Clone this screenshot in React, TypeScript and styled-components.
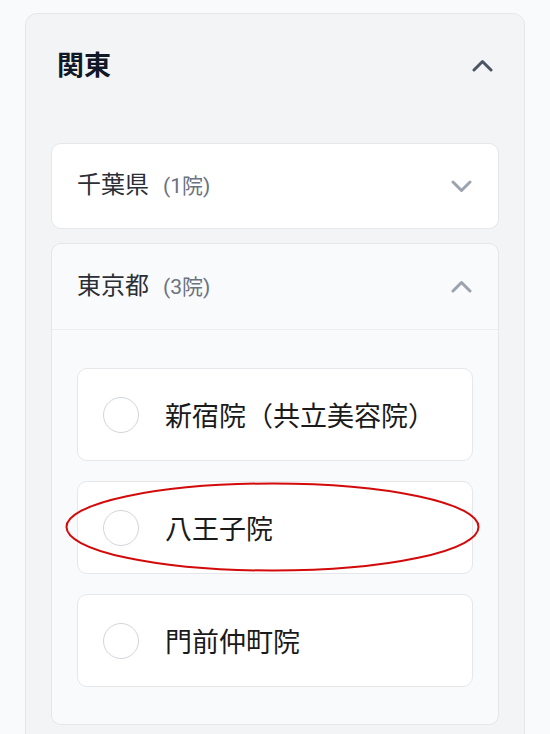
import React from "react";
import styled, { createGlobalStyle } from "styled-components";

const GlobalStyle = createGlobalStyle`
  html, body {
    margin: 0;
    padding: 0;
    background: #f9fafb;
    font-family: Roboto, "Noto Sans CJK JP", "Noto Sans", sans-serif;
  }
`;

type Clinic = { name: string; marked?: boolean };

const tokyoClinics: Clinic[] = [
  { name: "新宿院（共立美容院）" },
  { name: "八王子院", marked: true },
  { name: "門前仲町院" },
];

const Chevron = ({ up, color }: { up?: boolean; color: string }) => (
  <svg width="21" height="13" viewBox="0 0 21 13" fill="none">
    <polyline
      points={up ? "2,11 10.5,2.5 19,11" : "2,2 10.5,10.5 19,2"}
      stroke={color}
      strokeWidth="3"
      strokeLinecap="round"
      strokeLinejoin="round"
    />
  </svg>
);

const App = () => {
  return (
    <>
      <GlobalStyle />
      <Page>
        <RegionCard>
          <RegionHeader>
            <RegionTitle>関東</RegionTitle>
            <Chevron up color="#4b5563" />
          </RegionHeader>

          <PrefList>
            <PrefCard>
              <PrefHeader>
                <PrefName>
                  千葉県<Count>(1院)</Count>
                </PrefName>
                <Chevron color="#9ca3af" />
              </PrefHeader>
            </PrefCard>

            <PrefCard open>
              <PrefHeader open>
                <PrefName>
                  東京都<Count>(3院)</Count>
                </PrefName>
                <Chevron up color="#9ca3af" />
              </PrefHeader>
              <ClinicList>
                {tokyoClinics.map((c) => (
                  <ClinicItem key={c.name}>
                    <Radio />
                    <ClinicName>{c.name}</ClinicName>
                    {c.marked && (
                      <Mark viewBox="0 0 415 90" fill="none">
                        <ellipse
                          cx="207.5"
                          cy="45"
                          rx="206"
                          ry="43.5"
                          stroke="#d20a0a"
                          strokeWidth="2"
                        />
                      </Mark>
                    )}
                  </ClinicItem>
                ))}
              </ClinicList>
            </PrefCard>
          </PrefList>
        </RegionCard>
      </Page>
    </>
  );
};

const Page = styled.div`
  padding: 13px 25px 0 25px;
  height: 734px;
  box-sizing: border-box;
  overflow: hidden;
`;

const RegionCard = styled.div`
  background: #f3f4f6;
  border: 1px solid #e5e7eb;
  border-radius: 12px;
  padding: 0 25px 26px;
`;

const RegionHeader = styled.div`
  height: 103px;
  box-sizing: border-box;
  display: flex;
  align-items: center;
  justify-content: space-between;
  padding: 0 6px;
`;

const RegionTitle = styled.h2`
  margin: 0 0 5px;
  font-size: 27px;
  line-height: 1;
  font-weight: 700;
  color: #111827;
  font-family: "Noto Sans CJK JP", sans-serif;
`;

const PrefList = styled.div`
  display: flex;
  flex-direction: column;
  gap: 14px;
  padding-top: 26px;
`;

const PrefCard = styled.div<{ open?: boolean }>`
  background: ${(p) => (p.open ? "#f9fafb" : "#ffffff")};
  border: 1px solid #e5e7eb;
  border-radius: 10px;
`;

const PrefHeader = styled.div<{ open?: boolean }>`
  height: ${(p) => (p.open ? "85px" : "84px")};
  display: flex;
  align-items: center;
  justify-content: space-between;
  padding: 0 26px 0 25px;
  border-bottom: ${(p) => (p.open ? "1px solid #eceef1" : "none")};
`;

const PrefName = styled.span`
  font-size: 24px;
  line-height: 1;
  margin-bottom: 4px;
  color: #2b2f36;
  display: flex;
  align-items: baseline;
  font-family: "Noto Sans CJK JP", sans-serif;
`;

const Count = styled.span`
  margin-left: 14px;
  font-size: 21px;
  color: #6b7280;
  font-family: Roboto, "Noto Sans CJK JP", sans-serif;
`;

const ClinicList = styled.div`
  display: flex;
  flex-direction: column;
  gap: 20px;
  padding: 38px 25px 37px;
`;

const ClinicItem = styled.div`
  position: relative;
  height: 91px;
  display: flex;
  align-items: center;
  gap: 26px;
  padding: 0 25px;
  background: #ffffff;
  border: 1px solid #e5e7eb;
  border-radius: 10px;
`;

const Radio = styled.span`
  width: 36px;
  height: 36px;
  box-sizing: border-box;
  border-radius: 50%;
  border: 1.5px solid #d1d5db;
  background: #ffffff;
  flex-shrink: 0;
`;

const ClinicName = styled.span`
  font-size: 27px;
  color: #1a1a1a;
  font-family: "Noto Sans CJK JP", sans-serif;
`;

const Mark = styled.svg`
  position: absolute;
  left: -13px;
  top: 0px;
  width: 415px;
  height: 90px;
  pointer-events: none;
`;

export default App;
